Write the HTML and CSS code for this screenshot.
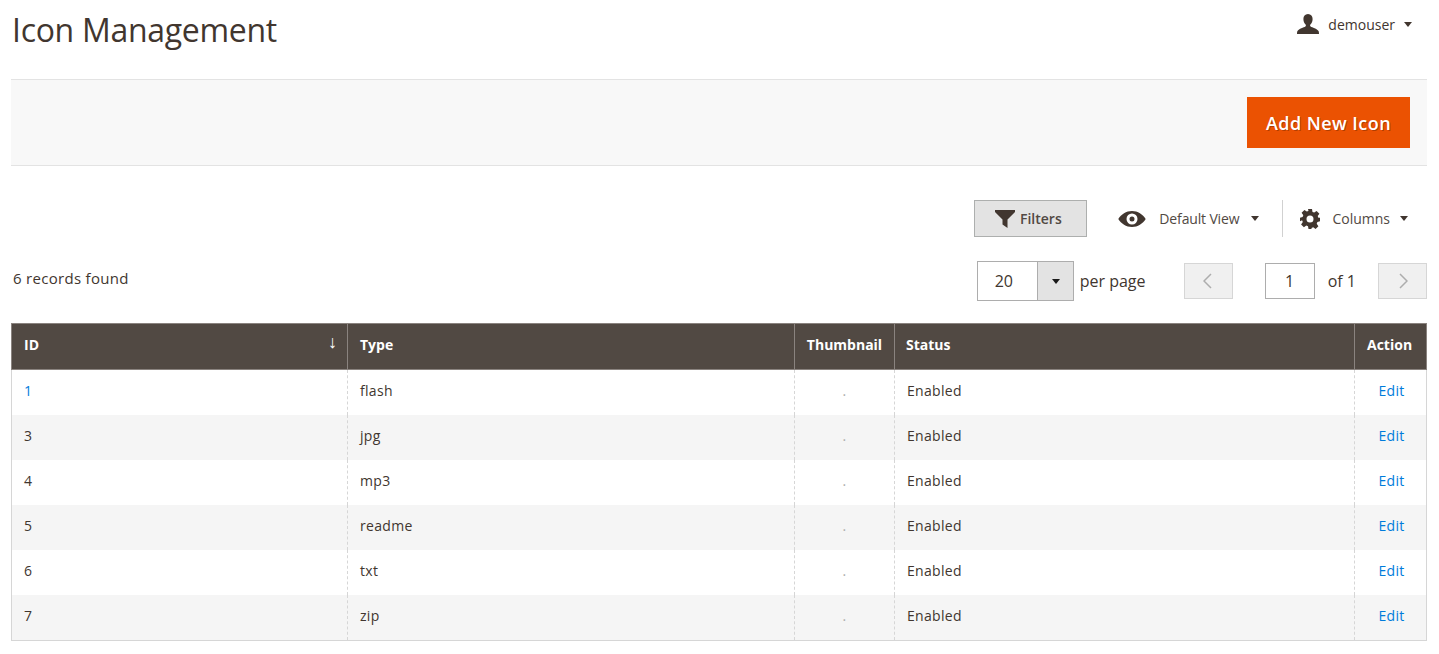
FILE: index.html
```html
<!DOCTYPE html>
<html lang="en">
<head>
    <meta charset="UTF-8">
    <title>Icon Management</title>
    <link rel="stylesheet" href="styles.css">
</head>
<body>
    <header class="page-header">
        <h1>Icon Management</h1>
        <div class="user-menu">
            <svg class="user-icon" width="22" height="20" viewBox="0 0 22 20"><path d="M11 0c3 0 4.600 2.200 4.600 5 0 2.300-.9 4.400-2.200 5.600-.5.500-.4 1.500.2 1.900 1.500 1 6.600 2.300 7.900 4.500.4.700.5 1.900.5 3H0c0-1.100.1-2.300.5-3 1.300-2.200 6.400-3.500 7.900-4.500.6-.4.700-1.400.2-1.900C7.300 9.400 6.400 7.300 6.400 5 6.400 2.200 8 0 11 0z" fill="#41362f"/></svg>
            <span class="user-name">demouser</span>
            <span class="caret caret-user"></span>
        </div>
    </header>

    <div class="page-actions">
        <button class="add-button">Add New Icon</button>
    </div>

    <div class="grid-controls">
        <button class="filters-button">
            <svg width="20" height="18" viewBox="0 0 20 18"><path d="M0 0h20v2L12.500 9.500V18l-5-3.600V9.500L0 2z" fill="#41362f"/></svg>
            Filters
        </button>
        <div class="view-menu">
            <svg width="28" height="16" viewBox="0 0 28 16"><path fill-rule="evenodd" d="M14 0c5.800 0 10.800 3.300 13.700 8-2.900 4.700-7.900 8-13.700 8S3.200 12.700.3 8C3.200 3.300 8.200 0 14 0zm0 2.500a5.500 5.500 0 1 0 0 11 5.500 5.500 0 0 0 0-11zm0 3a2.500 2.500 0 1 1 0 5 2.500 2.500 0 0 1 0-5z" fill="#41362f"/></svg>
            <span class="menu-label">Default View</span>
            <span class="caret"></span>
        </div>
        <div class="columns-menu">
            <svg width="20" height="20" viewBox="0 0 20 20"><path fill-rule="evenodd" d="M8 0h4l.5 2.900 1.700.7L16.600 1.900l2.800 2.800-1.700 2.400.7 1.700L20 8.800v3.400l-2.600.9-.7 1.700 1.700 2.400-2.800 2.800-2.400-1.700-1.700.7L11.500 20h-3l-.5-2.800-1.700-.7-2.400 1.700-2.800-2.800 1.700-2.400-.7-1.700L0 12.200V8.800l2.600-.9.700-1.700-1.700-2.400L4.400.9l2.400 1.700 1.700-.7zM10 6.500a3.500 3.500 0 1 0 0 7 3.500 3.500 0 0 0 0-7z" fill="#41362f"/></svg>
            <span class="menu-label">Columns</span>
            <span class="caret"></span>
        </div>
    </div>

    <div class="pager-row">
        <div class="records">6 records found</div>
        <div class="pager">
            <div class="per-page-select">
                <span class="per-page-value">20</span>
                <span class="per-page-toggle"><span class="caret"></span></span>
            </div>
            <span class="per-page-label">per page</span>
            <button class="page-button page-prev">
                <svg width="10" height="16" viewBox="0 0 10 16"><path d="M8 1L1 8l7 7" fill="none" stroke="#adadad" stroke-width="1.500"/></svg>
            </button>
            <span class="page-input">1</span>
            <span class="page-total">of 1</span>
            <button class="page-button page-next">
                <svg width="10" height="16" viewBox="0 0 10 16"><path d="M2 1l7 7-7 7" fill="none" stroke="#adadad" stroke-width="1.500"/></svg>
            </button>
        </div>
    </div>

    <table class="data-grid">
        <colgroup>
            <col class="col-id">
            <col class="col-type">
            <col class="col-thumb">
            <col class="col-status">
            <col class="col-action">
        </colgroup>
        <thead>
            <tr>
                <th class="sorted">ID <span class="sort-arrow">&#8595;</span></th>
                <th>Type</th>
                <th>Thumbnail</th>
                <th class="status-head">Status</th>
                <th>Action</th>
            </tr>
        </thead>
        <tbody>
            <tr><td class="link">1</td><td>flash</td><td class="thumb">.</td><td>Enabled</td><td class="action"><a href="#">Edit</a></td></tr>
            <tr><td>3</td><td>jpg</td><td class="thumb">.</td><td>Enabled</td><td class="action"><a href="#">Edit</a></td></tr>
            <tr><td>4</td><td>mp3</td><td class="thumb">.</td><td>Enabled</td><td class="action"><a href="#">Edit</a></td></tr>
            <tr><td>5</td><td>readme</td><td class="thumb">.</td><td>Enabled</td><td class="action"><a href="#">Edit</a></td></tr>
            <tr><td>6</td><td>txt</td><td class="thumb">.</td><td>Enabled</td><td class="action"><a href="#">Edit</a></td></tr>
            <tr><td>7</td><td>zip</td><td class="thumb">.</td><td>Enabled</td><td class="action"><a href="#">Edit</a></td></tr>
        </tbody>
    </table>
</body>
</html>
```

FILE: styles.css
```css
body {
    font-family: "Open Sans", Arial, sans-serif;
    font-size: 14px;
    color: #41362f;
    margin: 0;
    padding: 0 12px 0 11px;
    background-color: #FFFFFF;
}
button {
    font-family: inherit;
}
.page-header {
    display: flex;
    justify-content: space-between;
    height: 79px;
    padding-left: 1px;
}
.page-header h1 {
    margin: 9px 0 0;
    font-size: 32px;
    font-weight: 400;
    letter-spacing: -0.3px;
    line-height: 42px;
}
.user-menu {
    display: flex;
    align-items: center;
    height: 20px;
    margin: 14px 15px 0 0;
}
.user-name {
    margin-left: 9px;
}
.caret {
    display: inline-block;
    width: 0;
    height: 0;
    border-left: 4.500px solid transparent;
    border-right: 4.500px solid transparent;
    border-top: 5px solid #41362f;
}
.caret-user {
    margin-left: 9px;
}
.page-actions {
    display: flex;
    justify-content: flex-end;
    height: 87px;
    padding: 17px 17px 0 0;
    box-sizing: border-box;
    background-color: #F8F8F8;
    border-top: 1px solid #E3E3E3;
    border-bottom: 1px solid #E3E3E3;
}
.add-button {
    width: 163px;
    height: 51px;
    background-color: #EB5202;
    color: #FFFFFF;
    border: none;
    font-size: 18px;
    font-weight: 600;
    letter-spacing: 0.45px;
    text-shadow: 1px 1px 0 rgba(0, 0, 0, 0.25);
}
.grid-controls {
    display: flex;
    justify-content: flex-end;
    align-items: center;
    height: 37px;
    margin-top: 34px;
    padding-right: 19px;
}
.filters-button {
    display: flex;
    align-items: center;
    justify-content: center;
    gap: 5px;
    width: 113px;
    height: 37px;
    padding: 0 5px 0 0;
    background-color: #E3E3E3;
    border: 1px solid #ADAFAE;
    color: #514943;
    font-size: 14px;
    font-weight: 600;
}
.view-menu,
.columns-menu {
    display: flex;
    align-items: center;
    height: 37px;
    font-size: 14px;
    letter-spacing: -0.15px;
}
.view-menu {
    margin-left: 31px;
    padding-right: 23px;
    border-right: 1px solid #D1D1D1;
}
.columns-menu {
    margin-left: 17px;
}
.columns-menu .menu-label {
    margin-left: 12px;
    margin-right: 10px;
    letter-spacing: 0;
}
.menu-label {
    margin: 0 12px 0 13px;
    color: #514943;
}
.pager-row {
    display: flex;
    justify-content: space-between;
    align-items: center;
    height: 40px;
    margin-top: 24px;
    padding: 0 0 0 2px;
}
.records {
    margin-top: -6px;
    font-size: 15px;
    letter-spacing: 0.3px;
}
.pager {
    display: flex;
    align-items: center;
    font-size: 16px;
}
.per-page-select {
    display: flex;
    width: 97px;
    height: 40px;
    box-sizing: border-box;
    border: 1px solid #ADADAD;
}
.per-page-value {
    flex: 1;
    padding-left: 17px;
    line-height: 38px;
}
.per-page-toggle {
    display: flex;
    align-items: center;
    justify-content: center;
    width: 36px;
    padding-left: 2px;
    box-sizing: border-box;
    background-color: #E3E3E3;
    border-left: 1px solid #ADADAD;
}
.per-page-toggle .caret {
    border-top-color: #1A1A1A;
}
.per-page-label {
    width: 65px;
    margin-left: 6px;
    white-space: nowrap;
}
.page-button {
    display: flex;
    align-items: center;
    justify-content: center;
    width: 49px;
    height: 36px;
    padding: 0;
    background-color: #F0F0F0;
    border: 1px solid #D6D6D6;
}
.page-prev {
    margin-left: 39px;
}
.page-input {
    width: 50px;
    height: 36px;
    box-sizing: border-box;
    margin-left: 32px;
    border: 1px solid #ADADAD;
    text-align: center;
    line-height: 34px;
}
.page-total {
    margin: 0 22px 0 13px;
}
.data-grid {
    width: 1415px;
    margin-top: 22px;
    border-collapse: collapse;
    table-layout: fixed;
}
.col-id { width: 336px; }
.col-type { width: 447px; }
.col-thumb { width: 100px; }
.col-status { width: 460px; }
.col-action { width: 72px; }
.data-grid th {
    height: 46px;
    box-sizing: border-box;
    padding: 0 11px 5px 12px;
    background-color: #514943;
    border: 1px solid #8A837F;
    color: #FFFFFF;
    font-size: 14px;
    font-weight: 700;
    text-align: left;
}
.data-grid th:nth-child(3) {
    white-space: nowrap;
    padding: 0 0 5px;
    text-align: center;
}
.data-grid th.status-head {
    padding-left: 11px;
}
.data-grid th.sorted {
    position: relative;
}
.sort-arrow {
    position: absolute;
    right: 10px;
    top: 5px;
    font-size: 18px;
    font-weight: 400;
}
.data-grid td {
    height: 45px;
    box-sizing: border-box;
    padding: 0 12px 3px;
    border-left: 1px dashed #D6D6D6;
    border-right: 1px dashed #D6D6D6;
    font-size: 14px;
    letter-spacing: 0.3px;
}
.data-grid td:first-child {
    border-left: 1px solid #D6D6D6;
}
.data-grid td:last-child {
    border-right: 1px solid #D6D6D6;
}
.data-grid tbody tr:nth-child(even) td {
    background-color: #F5F5F5;
}
.data-grid tbody tr:last-child td {
    height: 46px;
    padding-bottom: 4px;
    border-bottom: 1px solid #D6D6D6;
}
.data-grid td.link {
    color: #007BDB;
}
.data-grid td.thumb {
    text-align: center;
    color: #ADADAD;
}
.data-grid td.action {
    padding-left: 14px;
    text-align: center;
}
.data-grid td.action a {
    color: #007BDB;
    text-decoration: none;
}
```
